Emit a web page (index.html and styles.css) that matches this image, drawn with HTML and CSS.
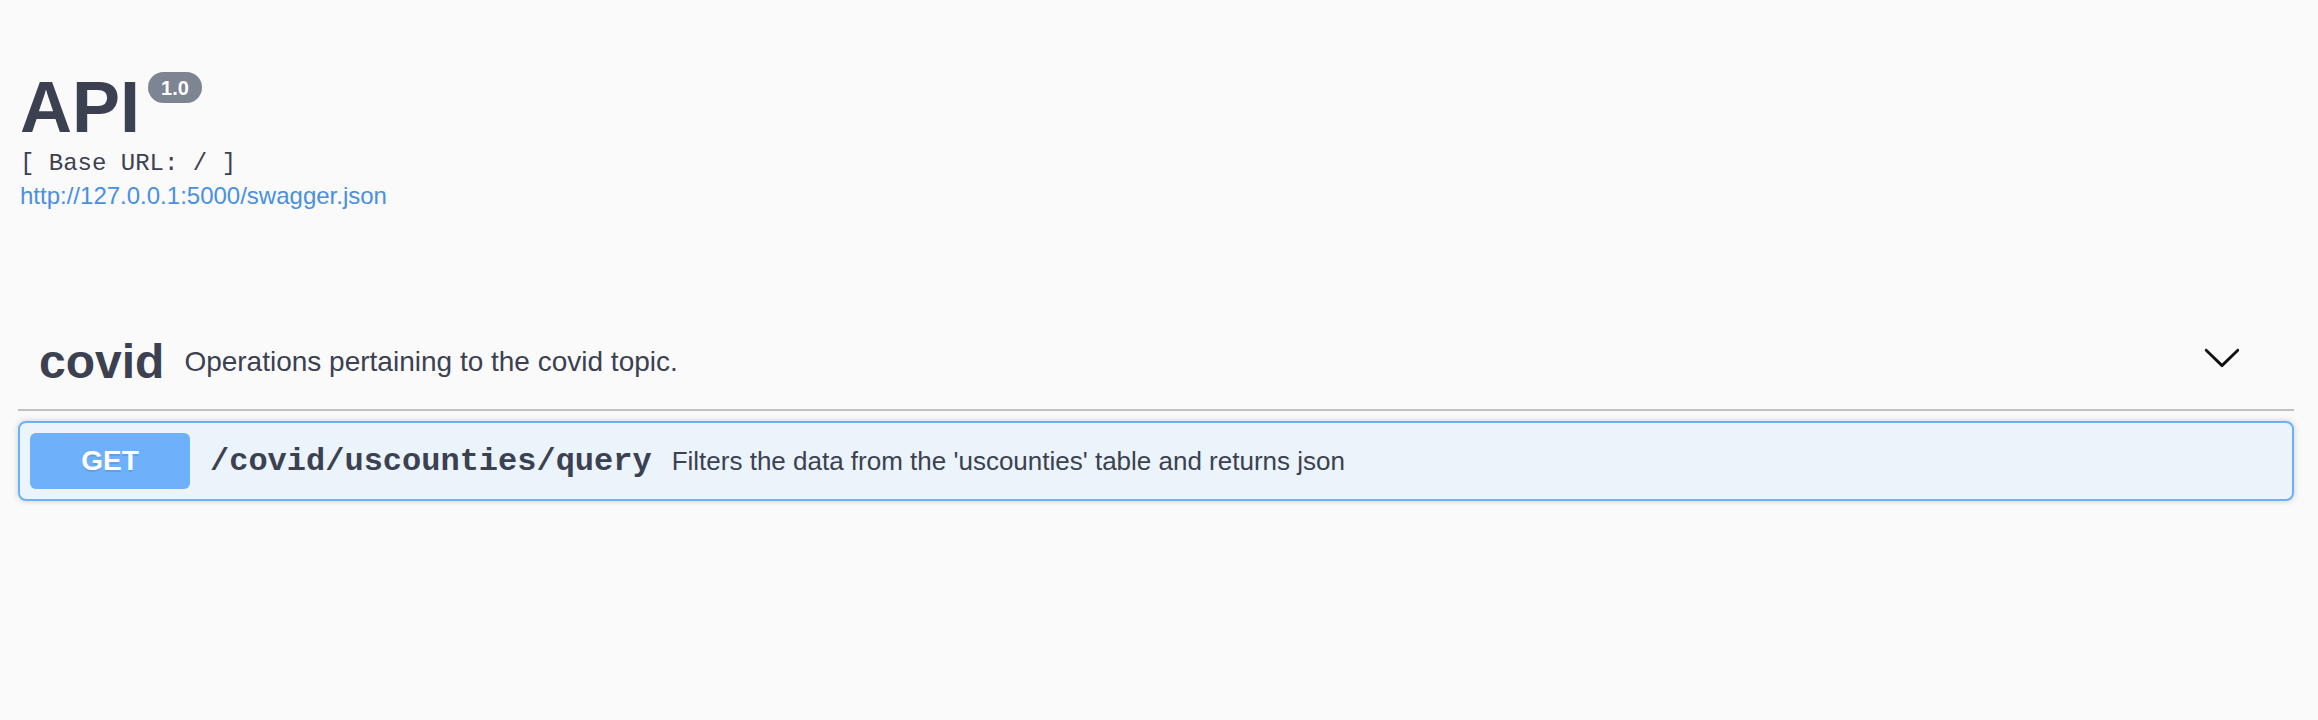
FILE: index.html
```html
<!DOCTYPE html>
<html lang="en">
<head>
<meta charset="utf-8">
<title>Swagger UI</title>
<link rel="stylesheet" href="styles.css">
</head>
<body>
<div class="wrapper">
  <div class="info">
    <h2 class="title"><span>API</span><span class="version">1.0</span></h2>
    <pre class="base-url">[ Base URL: / ]</pre>
    <a class="spec-link" href="#">http://127.0.0.1:5000/swagger.json</a>
  </div>
  <div class="tag-section">
    <h4 class="opblock-tag">
      <span class="tag-name">covid</span>
      <small class="tag-desc">Operations pertaining to the covid topic.</small>
      <button class="expand" type="button" aria-label="collapse">
        <svg width="40" height="40" viewBox="0 0 20 20"><path d="M17.418 6.109c.272-.268.709-.268.979 0s.271.701 0 .969l-7.908 7.83c-.27.268-.707.268-.979 0l-7.908-7.830c-.27-.268-.27-.701 0-.969.271-.268.709-.268.979 0L10 13.25l7.418-7.141z"/></svg>
      </button>
    </h4>
    <div class="opblock">
      <div class="summary">
        <span class="method">GET</span>
        <span class="path">/covid/uscounties/query</span>
        <div class="desc">Filters the data from the 'uscounties' table and returns json</div>
      </div>
    </div>
  </div>
</div>
</body>
</html>
```

FILE: styles.css
```css
html, body {
  margin: 0;
  padding: 0;
  background: #fafafa;
}
body {
  font-family: "Liberation Sans", Arial, sans-serif;
  color: #3b4151;
}
.wrapper {
  padding: 0 24px 0 18px;
}
.info {
  padding: 67px 0 0 2px;
  margin-bottom: 103px;
}
.title {
  display: flex;
  align-items: flex-start;
  margin: 0;
  font-size: 72px;
  line-height: 80px;
  font-weight: 700;
  color: #3b4151;
}
.version {
  margin: 5px 0 0 8px;
  height: 31px;
  box-sizing: border-box;
  padding: 2px 13px 0;
  line-height: 29px;
  font-size: 20px;
  font-weight: 700;
  color: #fff;
  background: #7d8492;
  border-radius: 16px;
}
.base-url {
  margin: 0;
  font-family: "Liberation Mono", "Courier New", monospace;
  font-size: 24px;
  line-height: 34px;
  font-weight: 400;
  color: #3b4151;
}
.spec-link {
  display: block;
  font-size: 24px;
  line-height: 30px;
  color: #4990e2;
  text-decoration: none;
}
.opblock-tag {
  display: flex;
  align-items: center;
  margin: 0 0 10px;
  padding: 20px 40px 20px 21px;
  border-bottom: 2px solid rgba(59, 65, 81, 0.3);
  font-weight: 400;
}
.tag-name {
  font-size: 48px;
  font-weight: 700;
  color: #3b4151;
}
.tag-desc {
  flex: 1;
  padding: 0 20px;
  font-size: 28px;
  color: #3b4151;
}
.expand {
  border: none;
  background: none;
  padding: 2px 12px;
  margin: 0 0 10px;
  display: flex;
}
.expand svg {
  fill: #111;
}
.opblock {
  margin: 0 0 15px;
  border: 2px solid #6db0fa;
  border-radius: 8px;
  background: #ebf3fb;
  box-shadow: 0 0 6px rgba(0, 0, 0, 0.19);
}
.summary {
  display: flex;
  align-items: center;
  padding: 10px;
}
.method {
  box-sizing: border-box;
  width: 160px;
  padding: 12px 30px;
  line-height: 32px;
  font-size: 28px;
  font-weight: 700;
  text-align: center;
  color: #fff;
  background: #6fb0fb;
  border-radius: 6px;
  text-shadow: 0 2px 0 rgba(0, 0, 0, 0.1);
}
.path {
  padding: 0 20px;
  font-family: "Liberation Mono", "Courier New", monospace;
  font-size: 32px;
  font-weight: 700;
  color: #3b4151;
}
.desc {
  flex: 1 1 auto;
  font-size: 26px;
  color: #3b4151;
}
```
